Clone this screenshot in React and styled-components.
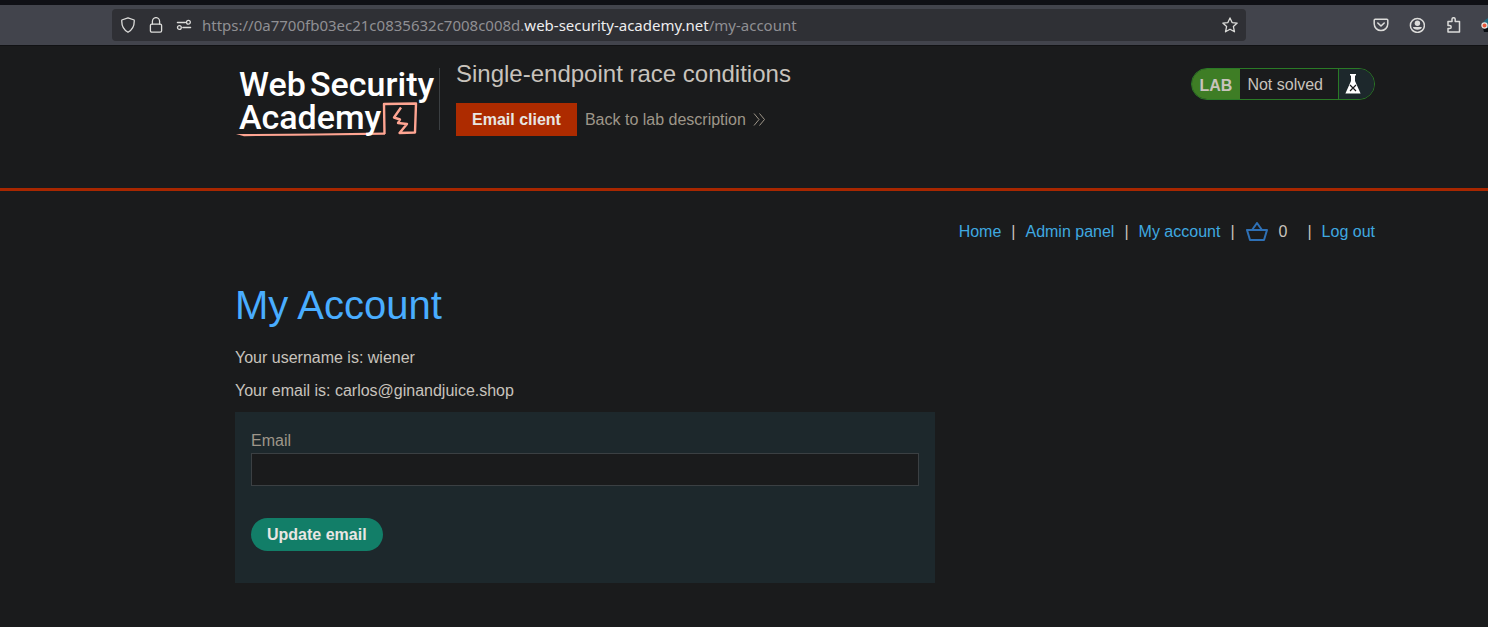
import React from "react";
import styled, { createGlobalStyle } from "styled-components";

const GlobalStyle = createGlobalStyle`
    * {
        box-sizing: border-box;
    }

    body {
        margin: 0;
        overflow-x: hidden;
        background-color: #1a1b1c;
        color: #c8c3bc;
        font-family: "Liberation Sans", Arial, sans-serif;
        font-size: 16px;
        line-height: 24px;
    }

    #root {
        min-height: 100vh;
    }
`

/* Browser bar */
const Toolbar = styled.div`
    display: flex;
    align-items: center;
    height: 46px;
    padding-left: 112px;
    overflow: hidden;
    background-color: #42444c;
    border-top: 5px solid #0f1015;
    border-bottom: 1px solid #111214;
`

const AddressBar = styled.div`
    display: flex;
    align-items: center;
    flex: 1;
    gap: 10px;
    height: 32px;
    padding: 0 8px;
    border-radius: 4px;
    background-color: #2f3035;
`

const SiteButtons = styled.div`
    display: flex;
    gap: 12px;
`

const Url = styled.span`
    flex: 1;
    font-family: "Noto Sans", sans-serif;
    font-size: 15px;
    color: #8f8f93;
    white-space: nowrap;

    b {
        font-weight: 400;
        color: #ededee;
    }
`

const BarButton = styled.button`
    display: flex;
    flex: none;
    padding: 0;
    border: 0;
    background: none;
    color: #dcdcda;
`

const Extensions = styled.div`
    display: flex;
    align-items: center;
    flex: none;
    gap: 20px;
    width: 242px;
    padding-left: 127px;
`

/* Page */
const Container = styled.div`
    max-width: 1488px;
    padding: 0 113px 0 235px;
`

const Header = styled.header`
    height: 145px;
    padding-top: 14px;
    border-bottom: 3px solid #a82700;
`

const HeaderRow = styled.div`
    display: flex;
    align-items: flex-start;
`

const LogoLink = styled.a`
    display: flex;
    flex: none;
    padding-top: 4px;

    text {
        font-family: Roboto, sans-serif;
        font-size: 34px;
        font-weight: 500;
        fill: #ffffff;
    }
`

const LabInfo = styled.div`
    flex: 1;
`

const LabTitle = styled.h2`
    margin: 0 0 15px;
    font-size: 24px;
    font-weight: 400;
    line-height: 28px;
`

const LabLinks = styled.div`
    display: flex;
    align-items: center;
    gap: 8px;
`

const RedButton = styled.button`
    height: 33px;
    padding: 0 16px;
    border: 0;
    background-color: #ad2b00;
    color: #e8e6e3;
    font-family: inherit;
    font-size: 16px;
    font-weight: 700;
`

const BackLink = styled.a`
    display: flex;
    align-items: center;
    gap: 7px;
    color: #9e9689;
    text-decoration: none;
`

const Status = styled.div`
    display: flex;
    height: 32px;
    margin-top: 8px;
    overflow: hidden;
    border: 1px solid #2a7a26;
    border-radius: 16px;
    line-height: 32px;
`

const LabTag = styled.span`
    padding: 0 8px;
    background-color: #3e7d25;
    font-weight: 700;
    line-height: 34px;
`

const StatusText = styled.span`
    padding: 0 15px 0 7px;
`

const Flask = styled.span`
    display: flex;
    align-items: center;
    width: 36px;
    padding-left: 6px;
    border-left: 1px solid #2a7a26;
    background-color: #1d282c;
`

const Nav = styled.nav`
    display: flex;
    align-items: center;
    justify-content: flex-end;
    gap: 10px;
    padding-top: 29px;

    a {
        display: flex;
        color: #3fa9e0;
        text-decoration: none;
    }
`

const CartCount = styled.span`
    margin-right: 10px;
`

const Title = styled.h1`
    margin: 37px 0 17px;
    color: #49adff;
    font-size: 40px;
    font-weight: 400;
    line-height: 48px;
`

const Info = styled.p`
    margin: 0 0 9px;
`

const EmailForm = styled.form`
    max-width: 700px;
    padding: 17px 16px 32px;
    background-color: #1d282c;
`

const Label = styled.label`
    display: block;
    color: #9e9689;
`

const EmailInput = styled.input`
    display: block;
    width: 100%;
    height: 33px;
    margin-bottom: 32px;
    padding: 0 8px;
    border: 1px solid #3b4043;
    background-color: #1a1b1c;
    color: inherit;
    font: inherit;
`

const UpdateButton = styled.button`
    display: block;
    height: 33px;
    padding: 0 16px;
    border: 0;
    border-radius: 17px;
    background-color: #127e68;
    color: #e8e6e3;
    font-family: inherit;
    font-size: 16px;
    font-weight: 700;
`

function Icon({ children }) {
    return (
        <svg width="16" height="16" viewBox="0 0 16 16" fill="none" stroke="currentColor" strokeWidth="1.3" strokeLinecap="round" strokeLinejoin="round" aria-hidden="true">
            {children}
        </svg>
    )
}

function BrowserBar() {
    return (
        <Toolbar>
            <AddressBar>
                <SiteButtons>
                    <BarButton aria-label="Tracking protection">
                        <Icon><path d="M8 .8 14.2 3C14.6 9 13 12.6 8 15.3 3 12.6 1.4 9 1.8 3Z" /></Icon>
                    </BarButton>
                    <BarButton aria-label="Connection security">
                        <Icon>
                            <rect x="2.4" y="7.2" width="11.2" height="8" rx="1.4" />
                            <path d="M4.4 7V4.2a3.6 3.6 0 0 1 7.2 0V7" />
                        </Icon>
                    </BarButton>
                    <BarButton aria-label="Permissions">
                        <Icon>
                            <path d="M1.4 5.5h8M6.8 10.5h7.8" />
                            <circle cx="12.4" cy="5.3" r="1.9" />
                            <circle cx="3.4" cy="10.5" r="1.9" />
                        </Icon>
                    </BarButton>
                </SiteButtons>
                <Url>https://0a7700fb03ec21c0835632c7008c008d.<b>web-security-academy.net</b>/my-account</Url>
                <BarButton aria-label="Bookmark">
                    <Icon><path d="m8 .9 2.1 4.7 5.1.5-3.8 3.5 1.1 5.2L8 12.2l-4.5 2.6 1.1-5.2L.8 6.1l5.1-.5Z" /></Icon>
                </BarButton>
            </AddressBar>
            <Extensions>
                <BarButton aria-label="Pocket">
                    <Icon>
                        <path d="M2.2 2.2h11.6c.6 0 1 .4 1 1v3.6a6.8 6.8 0 0 1-13.6 0V3.2c0-.6.4-1 1-1Z" strokeWidth="1.5" />
                        <path d="M4.8 6 8 9l3.2-3" strokeWidth="1.6" />
                    </Icon>
                </BarButton>
                <BarButton aria-label="Account">
                    <Icon>
                        <circle cx="8.4" cy="8.4" r="7" strokeWidth="1.5" />
                        <circle cx="8.4" cy="6.2" r="2.7" fill="currentColor" stroke="none" />
                        <path d="M4 10h8.8c0 1.7-2 2.8-4.4 2.8S4 11.7 4 10Z" fill="currentColor" stroke="none" />
                    </Icon>
                </BarButton>
                <BarButton aria-label="Extensions">
                    <Icon><path d="M3 4.4h4V2.3a1.6 1.6 0 0 1 3.2 0v2.1h4.3v10.7H3v-3.5h1.6a1.6 1.6 0 0 0 0-3.2H3Z" strokeWidth="1.5" /></Icon>
                </BarButton>
                <BarButton aria-label="Add-on">
                    <svg width="16" height="16" viewBox="0 0 16 16" aria-hidden="true">
                        <circle cx="9" cy="8" r="7" fill="#216b80" />
                        <path d="M2 11h8v4H3Z" fill="#090d12" />
                        <circle cx="3.5" cy="8.5" r="2.6" fill="#e8583c" stroke="#ece6df" strokeWidth="1.2" />
                    </svg>
                </BarButton>
            </Extensions>
        </Toolbar>
    )
}

function Logo() {
    return (
        <LogoLink href="#" aria-label="Web Security Academy">
            <svg width="221" height="76" viewBox="0 0 221 76">
                <path d="M149.5 70 149 40 181 39.5 180 68.5 164.500 69 172 60 163 59 165 55.5 159 53.500 166 43.500" fill="none" stroke="#ffa592" strokeWidth="2.4" strokeLinejoin="round" />
                <path d="M1 70 82 69.5 150 68.500v2.300L60 71.800 9 72.200Z" fill="#ffa592" />
                <text>
                    <tspan x="4" y="32">Web</tspan>
                    <tspan x="75" y="32">Security</tspan>
                    <tspan x="4" y="65">Academy</tspan>
                </text>
                <path d="M204.5 4v62" stroke="#3b3f42" strokeWidth="1" />
            </svg>
        </LogoLink>
    )
}

function LabHeader() {
    return (
        <Header>
            <Container>
                <HeaderRow>
                    <Logo />
                    <LabInfo>
                        <LabTitle>Single-endpoint race conditions</LabTitle>
                        <LabLinks>
                            <RedButton>Email client</RedButton>
                            <BackLink href="#">
                                Back to lab description
                                <svg width="13" height="14" viewBox="0 0 13 14" fill="none" stroke="currentColor" strokeWidth="1" aria-hidden="true">
                                    <path d="m1 .5 5 6-5 6M6.5 .5l5 6-5 6" />
                                </svg>
                            </BackLink>
                        </LabLinks>
                    </LabInfo>
                    <Status>
                        <LabTag>LAB</LabTag>
                        <StatusText>Not solved</StatusText>
                        <Flask>
                            <svg width="16" height="20" viewBox="0 0 16 20" aria-hidden="true">
                                <path d="M5 0h6v1.5H10V7l5.6 12.5H.4L6 7V1.5H5Z" fill="#ffffff" />
                                <path d="m5 11 6 6m0-6-6 6" stroke="#1a1b1c" strokeWidth="1.2" />
                            </svg>
                        </Flask>
                    </Status>
                </HeaderRow>
            </Container>
        </Header>
    )
}

function Account() {
    return (
        <Container as="main">
            <Nav>
                <a href="#">Home</a>
                <span>|</span>
                <a href="#">Admin panel</a>
                <span>|</span>
                <a href="#">My account</a>
                <span>|</span>
                <a href="#" aria-label="Basket">
                    <svg width="24" height="20" viewBox="0 0 24 20" fill="none" stroke="#2e70b5" strokeWidth="2" strokeLinejoin="round" aria-hidden="true">
                        <path d="M2 8h20l-3 10H5ZM7 8l5-7 5 7" />
                    </svg>
                </a>
                <CartCount>0</CartCount>
                <span>|</span>
                <a href="#">Log out</a>
            </Nav>
            <Title>My Account</Title>
            <Info>Your username is: wiener</Info>
            <Info>Your email is: carlos@ginandjuice.shop</Info>
            <EmailForm>
                <Label htmlFor="email">Email</Label>
                <EmailInput id="email" type="email" name="email" />
                <UpdateButton type="submit">Update email</UpdateButton>
            </EmailForm>
        </Container>
    )
}

function App() {
    return (
        <>
            <GlobalStyle />
            <BrowserBar />
            <LabHeader />
            <Account />
        </>
    )
}

export default App
